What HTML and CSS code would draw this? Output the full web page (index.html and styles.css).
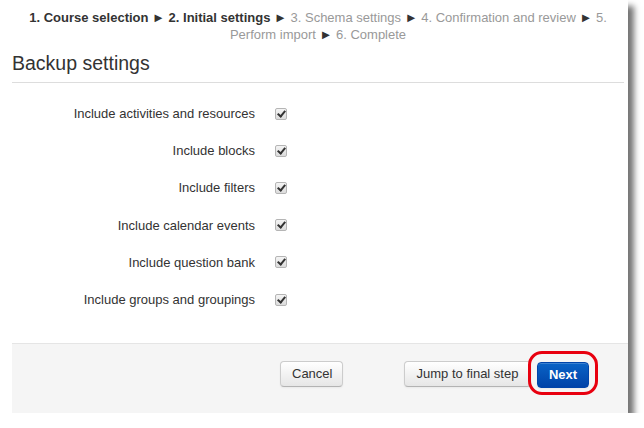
FILE: index.html
```html
<!DOCTYPE html>
<html>
<head>
<meta charset="utf-8">
<link rel="stylesheet" href="styles.css">
</head>
<body>
<div class="frame">
  <div class="steps">
    <span class="done">1. Course selection</span> ► <span class="done">2. Initial settings</span> ► <span class="todo">3. Schema settings</span> ► <span class="todo">4. Confirmation and review</span> ► <span class="todo">5.</span><br><span class="todo">Perform import</span> ► <span class="todo">6. Complete</span>
  </div>
  <h2 class="title">Backup settings</h2>
  <div class="fields">
    <div class="row"><span class="label">Include activities and resources</span><span class="cb"></span></div>
    <div class="row"><span class="label">Include blocks</span><span class="cb"></span></div>
    <div class="row"><span class="label">Include filters</span><span class="cb"></span></div>
    <div class="row"><span class="label">Include calendar events</span><span class="cb"></span></div>
    <div class="row"><span class="label">Include question bank</span><span class="cb"></span></div>
    <div class="row"><span class="label">Include groups and groupings</span><span class="cb"></span></div>
  </div>
  <div class="footer">
    <button class="btn cancel">Cancel</button>
    <button class="btn jump">Jump to final step</button>
    <span class="ring"><button class="btn primary">Next</button></span>
  </div>
</div>
</body>
</html>
```

FILE: styles.css
```css
html, body {
  margin: 0;
  padding: 0;
  background: #fff;
}
.frame {
  width: 616px;
  height: 413px;
  padding-left: 12px;
  background: #fff;
  box-shadow: 6px 6px 6px rgba(0,0,0,0.55);
  font-family: "Liberation Sans", Arial, sans-serif;
  color: #333;
  box-sizing: content-box;
  display: flex;
  flex-direction: column;
}
.steps {
  margin: 0 4px 0 0;
  padding-top: 9px;
  text-align: center;
  font-family: "Liberation Sans", Arial, sans-serif;
  font-size: 13px;
  line-height: 17px;
  color: #333;
}
.steps .done { font-weight: bold; }
.steps .todo { color: #999; }
.title {
  margin: 8px 4px 0 0;
  padding: 0 0 7px 0;
  font-size: 19.5px;
  font-weight: normal;
  line-height: 24px;
  color: #333;
  border-bottom: 1px solid #ddd;
}
.fields {
  padding-top: 12px;
  display: flex;
  flex-direction: column;
}
.row {
  height: 37.2px;
  display: flex;
  align-items: center;
  font-size: 13px;
}
.label {
  width: 243px;
  text-align: right;
}
.cb {
  margin-left: 20px;
  width: 10px;
  height: 10px;
  border: 1px solid #b5b5b5;
  border-radius: 2px;
  background: linear-gradient(#f4f4f4, #dcdcdc);
  position: relative;
}
.cb::after {
  content: "";
  position: absolute;
  left: 3px;
  top: 0px;
  width: 3px;
  height: 6px;
  border: solid #333;
  border-width: 0 2px 2px 0;
  transform: rotate(40deg);
}
.footer {
  margin-top: auto;
  height: 70px;
  box-sizing: border-box;
  background: #f5f5f5;
  border-top: 1px solid #e5e5e5;
  display: flex;
  align-items: center;
  padding-left: 268px;
  padding-bottom: 10px;
}
.btn {
  height: 26px;
  padding: 0 11px;
  font-family: "Liberation Sans", Arial, sans-serif;
  font-size: 13px;
  color: #333;
  white-space: nowrap;
  border: 1px solid #ccc;
  border-bottom-color: #b3b3b3;
  border-radius: 4px;
  background: linear-gradient(#ffffff, #e6e6e6);
  box-shadow: inset 0 1px 0 rgba(255,255,255,0.2), 0 1px 2px rgba(0,0,0,0.05);
}
.cancel { width: 63px; }
.jump { margin-left: 61px; width: 127px; padding: 0 8px; }
.ring {
  margin-left: -3px;
  padding: 8px 6px 4px 6px;
  border: 3px solid #e8000f;
  border-radius: 14px;
  display: flex;
  position: relative;
  top: -1px;
}
.primary {
  width: 52px;
  padding: 0;
  color: #fff;
  font-weight: bold;
  border-color: #0044aa;
  background: linear-gradient(#0a63c6, #0043a8);
}
```
